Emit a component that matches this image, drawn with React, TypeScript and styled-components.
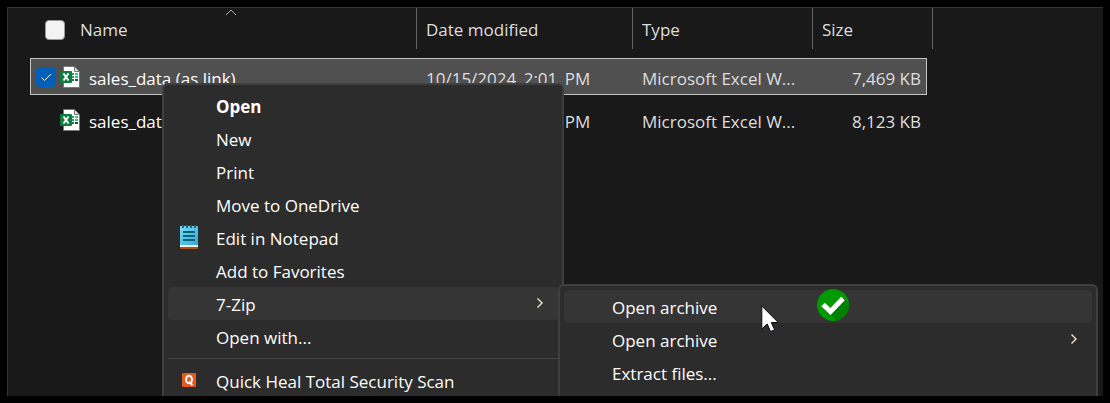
import React from "react";
import styled, { createGlobalStyle } from "styled-components";

const GlobalStyle = createGlobalStyle`
  * { box-sizing: border-box; }
  body {
    margin: 0;
    background: #000;
    color: #fff;
    font-family: "Open Sans", "Noto Sans", sans-serif;
    font-size: 17px;
    line-height: 24px;
  }
  button { font: inherit; color: inherit; }
`;

const Page = styled.div`
  display: flex;
  height: 100vh;
  padding: 7px;
`;

const ExplorerWindow = styled.main`
  position: relative;
  flex: 1;
  overflow: hidden;
  padding: 0 22px;
  background: #191919;
  border: solid #333;
  border-width: 1px 0 0 1px;
`;

const FileTable = styled.table`
  display: block;
`;

const TableHead = styled.thead`
  display: block;
  margin-bottom: 9px;
`;

const TableBody = styled.tbody`
  display: flex;
  flex-direction: column;
  gap: 6px;
`;

const HeaderRow = styled.tr`
  display: grid;
  grid-template-columns: 387px 216px 180px 120px;
  height: 41px;
`;

const HeaderCell = styled.th`
  position: relative;
  display: flex;
  align-items: center;
  gap: 15px;
  padding: 2px 0 0 9px;
  border-right: 1px solid #636363;
  color: #dedede;
  font-weight: 400;
`;

const NameHeader = styled(HeaderCell)`
  padding-left: 15px;
`;

const SortMark = styled.svg`
  position: absolute;
  top: 1px;
  left: 195px;
`;

const FileRow = styled.tr<{ $selected?: boolean }>`
  display: grid;
  grid-template-columns: 386px 216px 180px 113px;
  width: 897px;
  height: 37px;
  border: 1px solid ${(p) => (p.$selected ? "#c4c4c4" : "transparent")};
  background: ${(p) => (p.$selected ? "#505050" : "transparent")};
`;

const Cell = styled.td`
  padding: 8px 0 0 9px;
  color: #dedede;
  white-space: nowrap;
`;

const NameCell = styled(Cell)`
  display: flex;
  align-items: flex-start;
  padding-left: 5px;
  color: #fff;
`;

const SizeCell = styled(Cell)`
  padding-right: 5px;
  text-align: right;
`;

const DatePart = styled.span`
  padding-left: 3px;
`;

const FileIcon = styled.svg`
  flex: none;
  margin: -1px 9px 0 4px;
`;

const CheckHolder = styled.span<{ $hidden?: boolean }>`
  display: grid;
  opacity: ${(p) => (p.$hidden ? 0 : 1)};

  & > * { grid-area: 1 / 1; }
  svg { pointer-events: none; }
`;

const CheckInput = styled.input`
  appearance: none;
  width: 20px;
  height: 20px;
  margin: 0;
  border: 1px solid #9a9a9a;
  border-radius: 4px;
  background: #f3f3f3;

  &:checked {
    border-color: #005fb8;
    background: #005fb8;
  }
`;

const Menu = styled.div<{ $left: number; $top: number; $width: number }>`
  position: absolute;
  left: ${(p) => p.$left}px;
  top: ${(p) => p.$top}px;
  bottom: -8px;
  width: ${(p) => p.$width}px;
  padding: 4px;
  border: 2px solid #3f3f3f;
  border-radius: 6px;
  background: #2c2c2c;
`;

const MenuButton = styled.button<{ $active?: boolean; $strong?: boolean }>`
  display: grid;
  grid-template-columns: 48px 1fr 21px;
  align-items: center;
  width: 100%;
  height: 33px;
  padding: 0;
  border: 0;
  border-radius: 4px;
  background: ${(p) => (p.$active ? "#353535" : "transparent")};
  font-weight: ${(p) => (p.$strong ? 700 : 400)};
  text-align: left;
  white-space: nowrap;
`;

const IconSlot = styled.span`
  display: grid;
  place-items: center;
  width: 42px;
  padding-bottom: 2px;
`;

const MenuText = styled.span`
  padding-top: 2px;
`;

const Separator = styled.hr`
  height: 1px;
  margin: 5px 0;
  border: 0;
  background: #444;
`;

const Badge = styled.svg`
  position: absolute;
  left: 809px;
  top: 281px;
`;

const Pointer = styled.svg`
  position: absolute;
  left: 753px;
  top: 297px;
`;

function Check({ label, checked, hidden }: { label: string; checked?: boolean; hidden?: boolean }) {
  return (
    <CheckHolder $hidden={hidden}>
      <CheckInput type="checkbox" aria-label={label} defaultChecked={checked} />
      {checked && (
        <svg width="20" height="20" viewBox="0 0 20 20" fill="none" stroke="#fff">
          <path d="M5.500 10.500 8.500 13.500 15 7" />
        </svg>
      )}
    </CheckHolder>
  );
}

function ExcelIcon() {
  return (
    <FileIcon width="20" height="22" viewBox="0 0 20 22" aria-hidden="true">
      <path d="M3.500.5h11l5 5v16h-16z" fill="#fff" stroke="#777" />
      <path d="M14.500.5v5h5z" fill="#ddd" stroke="#777" />
      <path d="M12 7h2v2h-2zM12 10h2v2h-2z" fill="#21a366" />
      <path d="M12 13h2v2h-2z" fill="#107c41" />
      <path d="M15 7h3v2h-3zM15 10h3v2h-3z" fill="#33c481" />
      <path d="M15 13h3v2h-3z" fill="#185c37" />
      <rect y="5" width="12" height="12" rx="1" fill="#107c41" />
      <path d="m3.500 7.500 5 7M8.500 7.500l-5 7" stroke="#fff" strokeWidth="2" />
    </FileIcon>
  );
}

function NotepadIcon() {
  return (
    <svg width="18" height="24" viewBox="0 0 18 24" aria-hidden="true">
      <defs>
        <linearGradient id="pad" x1="0" y1="0" x2="1" y2="1">
          <stop offset="0" stopColor="#7bdcf5" />
          <stop offset="1" stopColor="#36a9cd" />
        </linearGradient>
      </defs>
      <path d="M0 20h18v3q0 1-1 1H1q-1 0-1-1z" fill="#b4500c" />
      <path d="M0 19h18v3H0z" fill="#eee" />
      <path d="M0 2q0-1 1-1h16q1 0 1 1v18H0z" fill="url(#pad)" />
      <path d="M3 0v3M7 0v3M11 0v3M15 0v3" stroke="#146a86" strokeWidth="2" />
      <path d="M3 7h12M3 11h12M3 15h12" stroke="#0b6380" strokeWidth="2" />
    </svg>
  );
}

function QuickHealIcon() {
  return (
    <svg width="14" height="14" viewBox="0 0 14 14" fill="none" aria-hidden="true">
      <rect width="14" height="14" rx="1" fill="#e8591c" />
      <ellipse cx="7" cy="6.500" rx="3" ry="3.700" stroke="#fff" strokeWidth="2" />
      <path d="m7 9 3.500 3" stroke="#fff" strokeWidth="2" />
    </svg>
  );
}

function Chevron() {
  return (
    <svg width="7" height="12" viewBox="0 0 7 12" fill="none" stroke="#f2e6d2" strokeWidth="1.400" aria-hidden="true">
      <path d="M.5.500 5 5 .5 9.500" />
    </svg>
  );
}

type ItemProps = {
  label: string;
  icon?: React.ReactNode;
  active?: boolean;
  strong?: boolean;
  more?: boolean;
};

function Item({ label, icon, active, strong, more }: ItemProps) {
  return (
    <MenuButton type="button" role="menuitem" $active={active} $strong={strong}>
      <IconSlot>{icon}</IconSlot>
      <MenuText>{label}</MenuText>
      {more && <Chevron />}
    </MenuButton>
  );
}

const files = [
  { name: "sales_data (as link)", date: ["10/15/2024", "2:01", "PM"], size: "7,469 KB", selected: true },
  { name: "sales_data", date: ["10/15/2024", "2:01", "PM"], size: "8,123 KB", selected: false },
];

export default function App() {
  return (
    <>
      <GlobalStyle />
      <Page>
        <ExplorerWindow>
          <FileTable>
            <TableHead>
              <HeaderRow>
                <NameHeader>
                  <Check label="Select all" />
                  Name
                  <SortMark width="12" height="7" viewBox="0 0 12 7" fill="none" stroke="#aaa">
                    <path d="M1 6 6 1l5 5" />
                  </SortMark>
                </NameHeader>
                <HeaderCell>Date modified</HeaderCell>
                <HeaderCell>Type</HeaderCell>
                <HeaderCell>Size</HeaderCell>
              </HeaderRow>
            </TableHead>
            <TableBody>
              {files.map((file) => (
                <FileRow key={file.name} $selected={file.selected}>
                  <NameCell>
                    <Check label={`Select ${file.name}`} checked={file.selected} hidden={!file.selected} />
                    <ExcelIcon />
                    {file.name}
                  </NameCell>
                  <Cell>
                    {file.date[0]} <DatePart>{file.date[1]}</DatePart> <DatePart>{file.date[2]}</DatePart>
                  </Cell>
                  <Cell>Microsoft Excel W...</Cell>
                  <SizeCell>{file.size}</SizeCell>
                </FileRow>
              ))}
            </TableBody>
          </FileTable>

          <Menu role="menu" $left={154} $top={75} $width={402}>
            <Item label="Open" strong />
            <Item label="New" />
            <Item label="Print" />
            <Item label="Move to OneDrive" />
            <Item label="Edit in Notepad" icon={<NotepadIcon />} />
            <Item label="Add to Favorites" />
            <Item label="7-Zip" active more />
            <Item label="Open with..." />
            <Separator />
            <Item label="Quick Heal Total Security Scan" icon={<QuickHealIcon />} />
          </Menu>

          <Menu role="menu" $left={550} $top={276} $width={540}>
            <Item label="Open archive" active />
            <Item label="Open archive" more />
            <Item label="Extract files..." />
          </Menu>

          <Badge width="32" height="32" viewBox="0 0 32 32" aria-hidden="true">
            <circle cx="16" cy="16" r="16" fill="#009a00" />
            <path d="M27 9.500 31.500 13A16 16 0 0 1 20 31.500L13 24.500z" fill="#008000" />
            <path d="m6 15.500 7.500 7L26 9.500" fill="none" stroke="#fff" strokeWidth="5" />
          </Badge>
          <Pointer width="20" height="28" viewBox="0 0 20 28" aria-hidden="true">
            <path
              d="M.8 1v23l5.400-5 3.400 7.500 4-1.700L10.300 17.500h7z"
              fill="#fff"
              stroke="#0a0a14"
            />
          </Pointer>
        </ExplorerWindow>
      </Page>
    </>
  );
}
